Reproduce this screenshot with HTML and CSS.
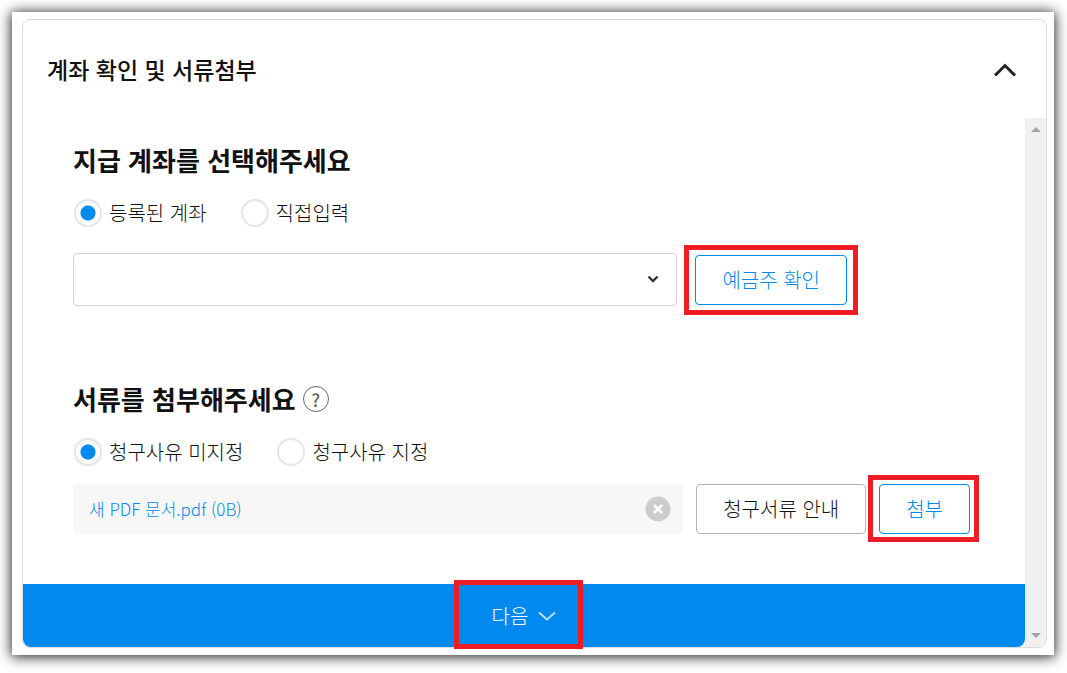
FILE: index.html
```html
<!DOCTYPE html>
<html lang="ko">
<head>
    <meta charset="UTF-8">
    <meta name="viewport" content="width=device-width, initial-scale=1.0">
    <title>계좌 확인 및 서류첨부</title>
    <link rel="stylesheet" href="styles.css">
</head>
<body>
    <main class="sheet">
        <section class="card">
            <header class="card-header">
                <h1>계좌 확인 및 서류첨부</h1>
                <button type="button" class="icon-button" aria-label="접기">
                    <svg width="24" height="14" viewBox="0 0 24 14"><path d="M2 13.5 12 3.5 22 13.5" fill="none" stroke="#222" stroke-width="3"/></svg>
                </button>
            </header>

            <div class="card-scroll">
                <form class="card-form">
                    <div class="card-body">
                        <!-- 지급 계좌 -->
                        <div class="group">
                            <h2>지급 계좌를 선택해주세요</h2>
                            <div class="radios">
                                <label><input type="radio" name="account" checked>등록된 계좌</label>
                                <label><input type="radio" name="account">직접입력</label>
                            </div>
                            <div class="row account-row">
                                <div class="select-box">
                                    <select aria-label="등록된 계좌">
                                        <option></option>
                                    </select>
                                    <svg width="12" height="8" viewBox="0 0 12 8"><path d="M1.5 1.5 6 6 10.5 1.5" fill="none" stroke="#333" stroke-width="2.3"/></svg>
                                </div>
                                <span class="mark mark-check"><button type="button" class="btn btn-blue">예금주 확인</button></span>
                            </div>
                        </div>

                        <!-- 서류 첨부 -->
                        <div class="group">
                            <div class="title-line">
                                <h2>서류를 첨부해주세요</h2>
                                <button type="button" class="help" aria-label="도움말">?</button>
                            </div>
                            <div class="radios">
                                <label><input type="radio" name="reason" checked>청구사유 미지정</label>
                                <label><input type="radio" name="reason">청구사유 지정</label>
                            </div>
                            <div class="row file-row">
                                <div class="file">
                                    <a href="#">새 PDF 문서.pdf (0B)</a>
                                    <button type="button" class="icon-button" aria-label="삭제">
                                        <svg width="26" height="26" viewBox="0 0 26 26"><circle cx="13" cy="13" r="12.5" fill="#ccc"/><path d="M9 9 17 17M17 9 9 17" stroke="#fff" stroke-width="2.6"/></svg>
                                    </button>
                                </div>
                                <button type="button" class="btn btn-gray">청구서류 안내</button>
                                <span class="mark mark-attach"><button type="button" class="btn btn-blue">첨부</button></span>
                            </div>
                        </div>
                    </div>

                    <div class="card-footer">
                        <span class="mark mark-next">
                            <button type="button" class="next">
                                다음
                                <svg width="18" height="10" viewBox="0 0 18 10"><path d="M1 1.5 9 8.5 17 1.5" fill="none" stroke="#b9dffb" stroke-width="2"/></svg>
                            </button>
                        </span>
                    </div>
                </form>

                <div class="scrollbar" aria-hidden="true">
                    <svg width="10" height="5" viewBox="0 0 10 5"><path d="M0 5 5 0 10 5z" fill="#a3a3a3"/></svg>
                    <svg width="10" height="5" viewBox="0 0 10 5"><path d="M0 0 5 5 10 0z" fill="#a3a3a3"/></svg>
                </div>
            </div>
        </section>
    </main>
</body>
</html>
```
FILE: styles.css
```css
* {
    box-sizing: border-box;
}

body {
    margin: 0;
    padding: 12px 13px 18px 12px;
    background: #fff;
    color: #111;
    font-family: "Noto Sans CJK KR", sans-serif;
    font-size: 20px;
    font-weight: 300;
    line-height: 28px;
}

button,
select {
    font: inherit;
    color: inherit;
}

button {
    padding: 0;
    border: 0;
    background: none;
    cursor: pointer;
}

svg {
    display: block;
}

h1,
h2 {
    margin: 0;
    line-height: 36px;
}

h1 {
    font-size: 23px;
    font-weight: 500;
}

h2 {
    font-size: 26px;
    font-weight: 700;
}

.sheet {
    padding: 7px 7px 7px 10px;
    background: #fff;
    box-shadow: 0 1px 12px 1px rgba(0, 0, 0, 0.85);
}

.card {
    border: 1px solid #dcdcdc;
    border-radius: 8px;
}

.card-header {
    display: flex;
    justify-content: space-between;
    align-items: center;
    height: 98px;
    padding: 0 29px 0 24px;
}

.card-scroll {
    display: flex;
}

.card-form {
    flex: 1;
}

.card-body {
    padding: 24px 55px 50px 50px;
}

.group + .group {
    margin-top: 75px;
}

.title-line {
    display: flex;
    align-items: center;
    gap: 7px;
}

.help {
    width: 26px;
    height: 26px;
    border: 1px solid #666;
    border-radius: 50%;
    color: #666;
    font-size: 18px;
    font-weight: 500;
    line-height: 24px;
}

.radios {
    display: flex;
    gap: 34px;
    margin-top: 21px;
    padding-left: 1px;
}

.radios label {
    display: flex;
    align-items: center;
    gap: 7px;
}

.radios input {
    appearance: none;
    width: 28px;
    height: 28px;
    margin: 0;
    border: 2px solid #e5e5e5;
    border-radius: 50%;
    background: #fff;
}

.radios input:checked {
    background: radial-gradient(circle, #0089ee 7px, #fff 8px);
}

.row {
    display: flex;
    align-items: center;
}

.account-row {
    gap: 18px;
    margin-top: 26px;
    padding-right: 123px;
}

.file-row {
    gap: 13px;
    margin-top: 18px;
}

.select-box {
    position: relative;
    flex: 1;
}

.select-box select {
    appearance: none;
    display: block;
    width: 100%;
    height: 53px;
    padding: 0 16px;
    border: 1px solid #d3d3d3;
    border-radius: 4px;
    background: #fff;
}

.select-box svg {
    position: absolute;
    top: 22px;
    right: 18px;
    pointer-events: none;
}

.btn {
    height: 50px;
    padding: 0 26px;
    border: 1px solid #0089ee;
    border-radius: 4px;
    background: #fff;
    white-space: nowrap;
}

.btn-blue {
    color: #0089ee;
}

.btn-gray {
    border-color: #b5b5b5;
}

.file {
    display: flex;
    flex: 1;
    justify-content: space-between;
    align-items: center;
    height: 50px;
    padding: 0 12px 0 16px;
    border-radius: 3px;
    background: #f7f7f7;
}

.file a {
    color: #0089ee;
    font-size: 17px;
    text-decoration: none;
}

.card-footer {
    display: flex;
    justify-content: center;
    height: 63px;
    border-radius: 0 0 8px 8px;
    background: #0089ee;
}

.next {
    display: flex;
    align-items: center;
    gap: 10px;
    height: 63px;
    padding: 0 27px;
    color: #fff;
}

/* red guide frames around the buttons to press */
.mark {
    position: relative;
    display: flex;
}

.mark::after {
    content: "";
    position: absolute;
    inset: -10px -11px;
    border: 5px solid #ee1c25;
    pointer-events: none;
}

.mark-attach::after {
    inset: -9px -9px -8px -11px;
}

.mark-next::after {
    inset: -4px 0 -2px -11px;
}

.scrollbar {
    display: flex;
    flex-direction: column;
    justify-content: space-between;
    align-items: center;
    width: 21px;
    padding: 9px 0;
    border-radius: 0 0 7px 0;
    background: #f0f0f0;
}
```
